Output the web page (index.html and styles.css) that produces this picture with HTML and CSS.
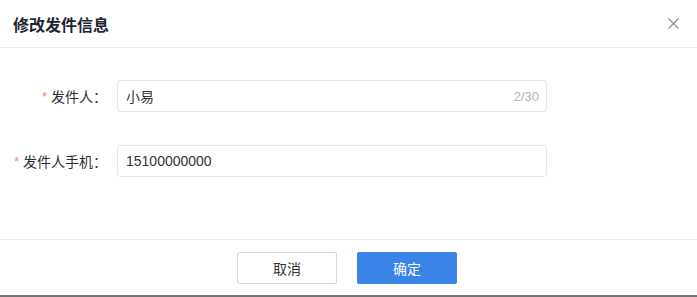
FILE: index.html
```html
<!DOCTYPE html>
<html lang="zh-CN">

<head>
    <meta charset="UTF-8">
    <meta name="viewport" content="width=device-width, initial-scale=1.0">
    <title>修改发件信息</title>
    <link rel="stylesheet" href="styles.css">
</head>

<body>
    <div class="dialog">
        <!-- Header -->
        <div class="dialog-header">
            <span class="dialog-title">修改发件信息</span>
            <span class="dialog-close">
                <svg width="11" height="11" viewBox="0 0 11 11">
                    <path d="M0.5 0.5 L10.5 10.5 M10.5 0.5 L0.5 10.5" stroke="#8a8a8a" stroke-width="1.1" fill="none" />
                </svg>
            </span>
        </div>

        <!-- Body -->
        <div class="dialog-body">
            <div class="form-row">
                <label class="form-label"><span class="required">*</span>发件人：</label>
                <div class="form-input">
                    <span class="input-value">小易</span>
                    <span class="input-count">2/30</span>
                </div>
            </div>
            <div class="form-row">
                <label class="form-label"><span class="required">*</span>发件人手机：</label>
                <div class="form-input">
                    <span class="input-value">15100000000</span>
                </div>
            </div>
        </div>

        <!-- Footer -->
        <div class="dialog-footer">
            <button class="btn btn-default">取消</button>
            <button class="btn btn-primary">确定</button>
        </div>
    </div>
</body>

</html>
```

FILE: styles.css
```css
body {
    margin: 0;
    background-color: #fff;
    font-family: 'Liberation Sans', 'Noto Sans CJK SC', sans-serif;
    color: #333;
}

.dialog {
    width: 697px;
    height: 297px;
    box-sizing: border-box;
    border-bottom: 2px solid #747474;
    background-color: #fff;
}

.dialog-header {
    height: 47px;
    border-bottom: 1px solid #e8eaec;
    display: flex;
    align-items: center;
    justify-content: space-between;
    padding: 0 18px 0 13px;
}

.dialog-title {
    font-size: 16px;
    font-weight: bold;
    color: #1f2533;
}

.dialog-close {
    display: flex;
    width: 11px;
    height: 11px;
    margin-top: -1px;
    cursor: pointer;
}

.dialog-body {
    padding: 32px 0 62px 0;
}

.form-row {
    display: flex;
    align-items: center;
    height: 32px;
}

.form-row + .form-row {
    margin-top: 33px;
}

.form-label {
    width: 117px;
    box-sizing: border-box;
    padding-right: 10px;
    text-align: right;
    font-size: 14px;
    color: #2b2f36;
}

.required {
    color: #f7846e;
    font-size: 13px;
    margin-right: 4px;
    position: relative;
    top: -1px;
}

.form-input {
    width: 430px;
    height: 32px;
    box-sizing: border-box;
    border: 1px solid #e3e5e9;
    border-radius: 3px;
    display: flex;
    align-items: center;
    justify-content: space-between;
    padding: 0 7px 0 8px;
}

.input-value {
    font-size: 14px;
    color: #333;
}

.input-count {
    font-size: 13px;
    color: #b5b5b5;
}

.dialog-footer {
    border-top: 1px solid #e8eaec;
    display: flex;
    justify-content: center;
    gap: 20px;
    padding: 12px 3px 0 0;
}

.btn {
    width: 100px;
    height: 32px;
    border-radius: 2px;
    font-family: 'Liberation Sans', 'Noto Sans CJK SC', sans-serif;
    font-size: 14px;
    cursor: pointer;
}

.btn-default {
    background-color: #fff;
    border: 1px solid #d9d9d9;
    color: #333;
}

.btn-primary {
    background-color: #3a83e7;
    border: 1px solid #3a83e7;
    color: #fff;
}
```
